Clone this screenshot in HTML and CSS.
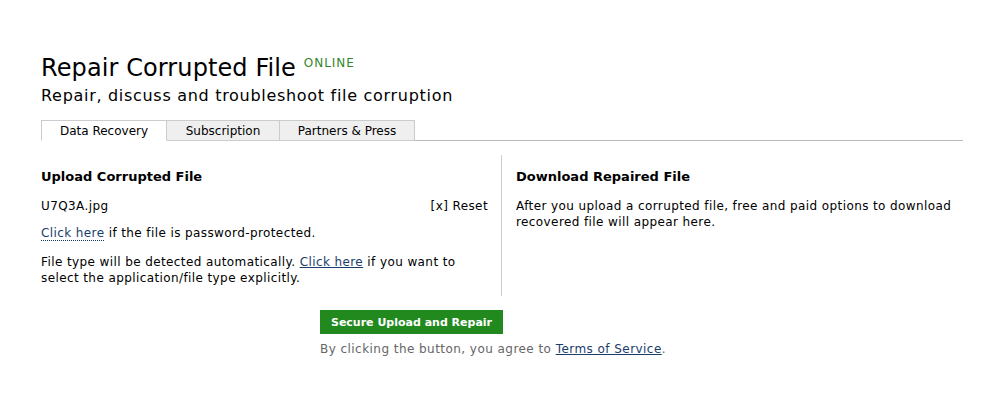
FILE: index.html
```html
<!DOCTYPE html>
<html>
<head>
    <title>Repair Corrupted File</title>
    <link rel="stylesheet" href="styles.css">
</head>
<body>
    <div class="page">
        <div class="header">
            <h1>Repair Corrupted File <span class="status">ONLINE</span></h1>
            <div class="tagline">Repair, discuss and troubleshoot file corruption</div>
        </div>

        <ul class="tabs">
            <li class="tab active">Data Recovery</li>
            <li class="tab">Subscription</li>
            <li class="tab">Partners &amp; Press</li>
        </ul>

        <div class="columns">
            <div class="col col-upload">
                <h3>Upload Corrupted File</h3>
                <div class="file-row">
                    <span>U7Q3A.jpg</span>
                    <span>[x] Reset</span>
                </div>
                <p><a href="#" class="dotted">Click here</a> if the file is password-protected.</p>
                <p>File type will be detected automatically. <a href="#">Click here</a> if you want to select the application/file type explicitly.</p>
            </div>
            <div class="col col-download">
                <h3>Download Repaired File</h3>
                <p>After you upload a corrupted file, free and paid options to download recovered file will appear here.</p>
            </div>
        </div>

        <div class="submit">
            <button type="button" class="btn-green">Secure Upload and Repair</button>
            <div class="agree">By clicking the button, you agree to <a href="#">Terms of Service</a>.</div>
        </div>
    </div>
</body>
</html>
```

FILE: styles.css
```css
body
{
    margin: 0;
    background-color: #fff;
    color: #000;
    font-family: "DejaVu Sans", Verdana, sans-serif;
    font-size: 12px;
    line-height: 16px;
}
.page
{
    width: 922px;
    padding: 48px 0 0 41px;
}
h1
{
    margin: 0;
    font-size: 24px;
    font-weight: normal;
    line-height: 30px;
    letter-spacing: 0.1px;
}
.status
{
    font-size: 12px;
    color: #34852a;
    vertical-align: 9px;
    letter-spacing: 1px;
}
.tagline
{
    margin-top: 3px;
    font-size: 16px;
    line-height: 20px;
    letter-spacing: 0.7px;
}
.tabs
{
    list-style: none;
    margin: 14px 0 0 0;
    padding: 0;
    display: flex;
    border-bottom: 1px solid #bbb;
}
.tab
{
    box-sizing: border-box;
    height: 21px;
    margin-bottom: -1px;
    line-height: 20px;
    font-size: 12px;
    text-align: center;
    border: 1px solid #ccc;
    border-left: 0;
    background-color: #efefef;
}
.tab:nth-child(1) { width: 126px; border-left: 1px solid #ccc; }
.tab:nth-child(2) { width: 113px; }
.tab:nth-child(3) { width: 135px; }
.tab.active
{
    background-color: #fff;
    border-bottom-color: #fff;
}
.columns
{
    display: flex;
    margin-top: 14px;
    letter-spacing: 0.4px;
}
.col
{
    padding-top: 14px;
}
.col-upload
{
    width: 447px;
    padding-right: 13px;
    border-right: 1px solid #ccc;
    padding-bottom: 10px;
}
.col-download
{
    flex: 1;
    padding-left: 14px;
}
h3
{
    margin: 0 0 13px 0;
    font-size: 13px;
    line-height: 16px;
    letter-spacing: 0;
}
.file-row
{
    display: flex;
    justify-content: space-between;
    margin-bottom: 11px;
}
p
{
    margin: 0 0 13px 0;
}
p:last-child
{
    margin-bottom: 0;
}
a
{
    color: #1a3d6b;
}
a.dotted
{
    text-decoration: none;
    border-bottom: 1px dotted #1a3d6b;
}
.submit
{
    margin: 14px 0 0 279px;
}
.btn-green
{
    width: 183px;
    height: 24px;
    border: 0;
    padding: 0;
    background-color: #22891f;
    color: #fff;
    font-family: inherit;
    font-size: 11px;
    font-weight: bold;
}
.agree
{
    margin-top: 7px;
    color: #666;
    letter-spacing: 0.45px;
}
.agree a
{
    color: #1a3d6b;
}
```
